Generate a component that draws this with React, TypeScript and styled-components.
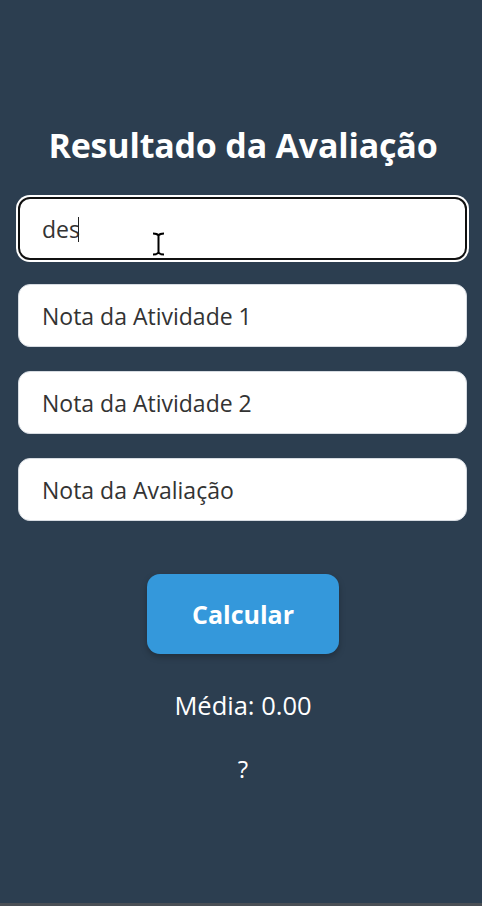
import React, { useState } from "react";
import styled, { createGlobalStyle } from "styled-components";

const Global = createGlobalStyle`
  html, body { margin: 0; padding: 0; background: #2c3e50; }
  body { font-family: "Open Sans", "Noto Sans", Arial, sans-serif; }
  * { box-sizing: border-box; }
`;

const Page = styled.main`
  height: 906px;
  background: #2c3e50;
  display: flex;
  flex-direction: column;
  align-items: center;
  padding-top: 121px;
  color: #fff;
  border-bottom: 3px solid #4a4f55;
`;

const Title = styled.h1`
  margin: 0 0 28px;
  font-size: 34px;
  font-weight: 700;
  line-height: 48px;
  letter-spacing: -0.2px;
  margin-left: 4px;
`;

const Form = styled.div`
  width: 449px;
  margin-left: 3px;
  display: flex;
  flex-direction: column;
  gap: 24px;
`;

const Field = styled.div`
  position: relative;
`;

const Input = styled.input<{ $active?: boolean }>`
  width: 100%;
  height: 63px;
  border-radius: 12px;
  border: 1px solid #d6dbe1;
  background: #fff;
  padding: 0 23px;
  font-family: inherit;
  font-size: 23px;
  color: #333;
  outline: none;
  caret-color: transparent;
  ${(p) =>
    p.$active &&
    `
    border: 2px solid #111;
    padding: 0 22px;
    box-shadow: 0 0 0 2px #fff;
  `}
  &::placeholder { color: #333; }
`;

const Caret = styled.span`
  position: absolute;
  left: 60px;
  top: 20px;
  width: 1px;
  height: 25px;
  background: #222;
  pointer-events: none;
`;

const Cursor = styled.svg`
  position: absolute;
  left: 134px;
  top: 35px;
  pointer-events: none;
`;

const Button = styled.button`
  margin-top: 53px;
  margin-left: 4px;
  width: 192px;
  height: 80px;
  border: none;
  border-radius: 13px;
  background: #3498db;
  color: #fff;
  font-family: inherit;
  font-size: 25px;
  font-weight: 700;
  box-shadow: 0 3px 6px rgba(0, 0, 0, 0.25);
  cursor: pointer;
`;

const Result = styled.p`
  margin: 33px 0 0;
  margin-left: 4px;
  font-size: 25.5px;
  line-height: 36px;
`;

const Status = styled.p`
  margin: 28px 0 0;
  margin-left: 4px;
  font-size: 24px;
  line-height: 36px;
`;

export default function App() {
  const [a, setA] = useState("des");
  return (
    <>
      <Global />
      <Page>
        <Title>Resultado da Avaliação</Title>
        <Form>
          <Field>
            <Input $active value={a} onChange={(e) => setA(e.target.value)} />
            <Caret />
            <Cursor width="13" height="24" viewBox="0 0 13 24">
              <path d="M1 1.5c3 0 4.5 0.5 5.5 2M12 1.5c-3 0-4.5 0.5-5.5 2M1 22.5c3 0 4.5-0.5 5.5-2M12 22.5c-3 0-4.5-0.5-5.5-2M6.5 3v18" stroke="#000" strokeWidth="2" fill="none" />
            </Cursor>
          </Field>
          <Field>
            <Input placeholder="Nota da Atividade 1" />
          </Field>
          <Field>
            <Input placeholder="Nota da Atividade 2" />
          </Field>
          <Field>
            <Input placeholder="Nota da Avaliação" />
          </Field>
        </Form>
        <Button>Calcular</Button>
        <Result>Média: 0.00</Result>
        <Status>?</Status>
      </Page>
    </>
  );
}
